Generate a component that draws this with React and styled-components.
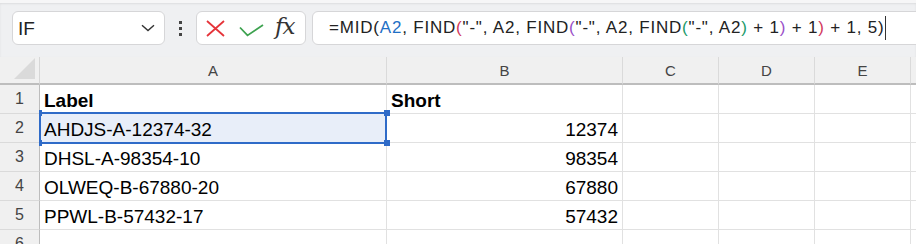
import React from "react";
import styled, { createGlobalStyle } from "styled-components";

const GlobalStyle = createGlobalStyle`
  html, body {
    margin: 0;
    padding: 0;
    background: #fff;
    overflow: hidden;
  }
  body {
    font-family: "Liberation Sans", Arial, sans-serif;
  }
`;

const rows = [
  { label: "Label", short: "Short", head: true },
  { label: "AHDJS-A-12374-32", short: "12374", selected: true },
  { label: "DHSL-A-98354-10", short: "98354" },
  { label: "OLWEQ-B-67880-20", short: "67880" },
  { label: "PPWL-B-57432-17", short: "57432" },
  { label: "", short: "" },
];

const columns = ["A", "B", "C", "D", "E", ""];

function App() {
  return (
    <>
      <GlobalStyle />
      <Page>
        <Toolbar>
          <NameBox>
            <span>IF</span>
            <svg width="14" height="8" viewBox="0 0 14 8">
              <path d="M1 1.2 L7 6.6 L13 1.2" fill="none" stroke="#333" strokeWidth="1.4" />
            </svg>
          </NameBox>
          <Dots>
            <i />
            <i />
            <i />
          </Dots>
          <ActionBox>
            <svg width="19" height="17" viewBox="0 0 19 17">
              <path d="M1 1 L18 16 M18 1 L1 16" stroke="#e5343a" strokeWidth="1.8" fill="none" />
            </svg>
            <svg width="25" height="13" viewBox="0 0 25 13">
              <path d="M1 3.5 L8.5 11.4 L24 1" stroke="#3da24f" strokeWidth="1.8" fill="none" />
            </svg>
            <Fx>fx</Fx>
          </ActionBox>
          <FormulaBox>
            <span>=MID(</span>
            <Ref>A2</Ref>
            <span>, FIND</span>
            <Paren $color="#d2385c">(</Paren>
            <span>"-", A2, FIND</span>
            <Paren $color="#9a4fc8">(</Paren>
            <span>"-", A2, FIND</span>
            <Paren $color="#1b9a6a">(</Paren>
            <span>"-", A2</span>
            <Paren $color="#1b9a6a">)</Paren>
            <span> + 1</span>
            <Paren $color="#9a4fc8">)</Paren>
            <span> + 1</span>
            <Paren $color="#d2385c">)</Paren>
            <span> + 1, 5)</span>
            <Caret />
          </FormulaBox>
        </Toolbar>

        <Sheet>
          <Corner>
            <svg width="22" height="21" viewBox="0 0 22 21">
              <path d="M21 0 L21 21 L0 21 Z" fill="#dadada" />
            </svg>
          </Corner>
          {columns.map((c, i) => (
            <ColHeader key={"h" + i}>{c}</ColHeader>
          ))}

          {rows.map((r, i) => (
            <React.Fragment key={i}>
              <RowHeader>{i + 1}</RowHeader>
              <Cell $bold={r.head} $selected={r.selected}>
                {r.label}
                {r.selected && (
                  <>
                    <Handle $top $left />
                    <Handle $top />
                    <Handle $left />
                    <Handle />
                  </>
                )}
              </Cell>
              <Cell $bold={r.head} $right={!r.head}>
                {r.short}
              </Cell>
              <Cell />
              <Cell />
              <Cell />
              <Cell />
            </React.Fragment>
          ))}
        </Sheet>
      </Page>
    </>
  );
}

export default App;

const Page = styled.div`
  width: 916px;
  height: 244px;
  overflow: hidden;
`;

const Toolbar = styled.div`
  height: 57px;
  box-sizing: border-box;
  background: #eff0f2;
  border-top: 3px solid #f6f6f7;
  box-shadow: inset 0 1px 2px rgba(0, 0, 0, 0.08);
  display: flex;
  align-items: flex-start;
  padding: 8px 0 0 12px;
`;

const Box = styled.div`
  height: 34px;
  box-sizing: border-box;
  background: #fff;
  border: 1px solid #d6d6d8;
  border-radius: 6px;
  display: flex;
  align-items: center;
`;

const NameBox = styled(Box)`
  width: 153px;
  padding: 0 9px 0 5px;
  justify-content: space-between;
  font-size: 19px;
  color: #222;

  span {
    padding-top: 1px;
  }
`;

const Dots = styled.div`
  width: 31px;
  height: 34px;
  display: flex;
  flex-direction: column;
  align-items: center;
  justify-content: center;
  gap: 3px;

  i {
    width: 3px;
    height: 3px;
    background: #444;
  }
`;

const ActionBox = styled(Box)`
  width: 110px;
  padding: 0 6px 0 9px;
  gap: 14px;

  svg:first-child {
    margin-top: 1px;
  }
  svg:nth-child(2) {
    margin-top: 4px;
  }
`;

const Fx = styled.span`
  font-family: "DejaVu Serif", "Liberation Serif", serif;
  font-style: italic;
  font-size: 23px;
  color: #333;
  margin-left: -3px;
  margin-top: -4px;
  letter-spacing: -1px;
`;

const FormulaBox = styled(Box)`
  flex: 1;
  margin-left: 6px;
  margin-right: -10px;
  padding-left: 16px;
  font-size: 17px;
  letter-spacing: 0.8px;
  color: #222;
  white-space: pre;
`;

const Ref = styled.span`
  color: #1f6fc5;
`;

const Paren = styled.span`
  color: ${(p) => p.$color};
`;

const Caret = styled.span`
  width: 1px;
  height: 24px;
  background: #333;
  margin-left: 1px;
`;

const Sheet = styled.div`
  display: grid;
  grid-template-columns: 40px 347px 236px 96px 96px 96px 1fr;
  grid-template-rows: 28px;
  grid-auto-rows: 29px;
`;

const Corner = styled.div`
  background: #f0f0f0;
  border-right: 1px solid #d6d6d6;
  border-bottom: 2px solid #bdbdbd;
  display: flex;
  align-items: flex-end;
  justify-content: flex-end;
  padding: 0 3px 4px 0;
`;

const ColHeader = styled.div`
  background: #f0f0f0;
  border-right: 1px solid #dadada;
  border-bottom: 2px solid #bdbdbd;
  color: #444;
  font-size: 15px;
  text-align: center;
  line-height: 26px;
  padding-top: 1px;
`;

const RowHeader = styled.div`
  background: #f0f0f0;
  border-right: 1px solid #bdbdbd;
  border-bottom: 1px solid #dadada;
  color: #444;
  font-size: 16px;
  text-align: center;
  line-height: 28px;
`;

const Cell = styled.div`
  position: relative;
  border-right: 1px solid #e1e1e1;
  border-bottom: 1px solid #e1e1e1;
  font-size: 19px;
  line-height: 24px;
  padding: 4px 4px 0 4px;
  color: #000;
  white-space: nowrap;
  font-weight: ${(p) => (p.$bold ? 700 : 400)};
  text-align: ${(p) => (p.$right ? "right" : "left")};
  background: ${(p) => (p.$selected ? "#e8eef9" : "transparent")};

  ${(p) =>
    p.$selected &&
    `
    &::after {
      content: "";
      position: absolute;
      left: -1px;
      top: -2px;
      right: -1px;
      bottom: -2px;
      border: 2px solid #2f6bc8;
      pointer-events: none;
    }
  `}
`;

const Handle = styled.span`
  position: absolute;
  z-index: 2;
  width: ${(p) => (p.$left ? "3px" : "6px")};
  height: 6px;
  background: #2f6bc8;
  ${(p) => (p.$left ? "left: -1px;" : "right: -4px;")}
  ${(p) => (p.$top ? "top: -4px;" : "bottom: -4px;")}
`;
